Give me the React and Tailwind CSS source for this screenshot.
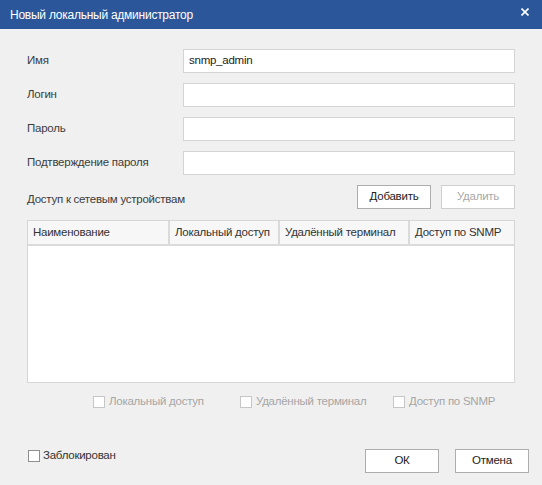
import React from "react";

const font = {
  fontFamily: '"Liberation Sans", Arial, sans-serif',
  letterSpacing: "-0.25px",
};

const Field = ({ label, value }) => (
  <div className="flex items-center h-[24px]">
    <span className="w-[156px] text-[11.5px] text-[#3c3c3c]">{label}</span>
    <div className="flex-1 h-[24px] bg-white border border-[#d4d4d4] flex items-center px-[5px] text-[11.5px] text-[#222]">
      {value}
    </div>
  </div>
);

const Box = ({ disabled }) => (
  <span
    className={
      "inline-block w-[12px] h-[12px] bg-white border " +
      (disabled ? "border-[#c6c6c6]" : "border-[#8f8f8f]")
    }
  />
);

const Btn = ({ children, disabled }) => (
  <div
    className={
      "w-[74px] h-[24px] flex items-center justify-center text-[11.5px] bg-white border " +
      (disabled ? "border-[#cfcfcf] text-[#a8a8a8]" : "border-[#adadad] text-[#222]")
    }
  >
    {children}
  </div>
);

export default function App() {
  const cols = [
    { name: "Наименование", w: "w-[142px]" },
    { name: "Локальный доступ", w: "w-[110px]" },
    { name: "Удалённый терминал", w: "w-[130px]" },
    { name: "Доступ по SNMP", w: "flex-1" },
  ];

  return (
    <div className="w-[542px] h-[485px] bg-[#f0f0f0] flex flex-col" style={font}>
      <div className="h-[29px] bg-[#2b579a] flex items-center justify-between pl-[10px] pr-[13px]">
        <span className="text-white text-[12px]">Новый локальный администратор</span>
        <svg width="8" height="8" viewBox="0 0 8 8" className="mb-[5px]">
          <path d="M0.5 0.5 L7.5 7.5 M7.5 0.5 L0.5 7.5" stroke="white" strokeWidth="1.6" />
        </svg>
      </div>

      <div className="flex flex-col flex-1 px-[27px] pt-[20px] pb-[12px]">
        <div className="flex flex-col gap-[10px]">
          <Field label="Имя" value="snmp_admin" />
          <Field label="Логин" />
          <Field label="Пароль" />
          <Field label="Подтверждение пароля" />
        </div>

        <div className="flex items-end justify-between mt-[10px]">
          <span className="text-[11.5px] text-[#3c3c3c] mb-[1px]">Доступ к сетевым устройствам</span>
          <div className="flex gap-[10px]">
            <Btn>Добавить</Btn>
            <Btn disabled>Удалить</Btn>
          </div>
        </div>

        <div className="mt-[11px] h-[163px] bg-white border border-[#d6d6d6] flex flex-col">
          <div className="flex h-[25px] bg-[#f7f7f7]">
            {cols.map((c, i) => (
              <div
                key={c.name}
                className={
                  c.w +
                  " flex items-center whitespace-nowrap overflow-hidden px-[5px] text-[11.5px] text-[#333] border-b-2 border-[#dadada] " +
                  (i < cols.length - 1 ? "border-r-2" : "")
                }
              >
                {c.name}
              </div>
            ))}
          </div>
        </div>

        <div className="flex items-center mt-[10px] pl-[66px] text-[11.5px] text-[#a6a6a6]">
          <div className="w-[147px] flex items-center gap-[4px]">
            <Box disabled />
            <span>Локальный доступ</span>
          </div>
          <div className="w-[153px] flex items-center gap-[4px]">
            <Box disabled />
            <span>Удалённый терминал</span>
          </div>
          <div className="flex items-center gap-[4px]">
            <Box disabled />
            <span>Доступ по SNMP</span>
          </div>
        </div>

        <div className="mt-auto flex items-start justify-between">
          <div className="flex items-center gap-[3px] pl-[1px] -mt-[2px] text-[11.5px] text-[#333]">
            <Box />
            <span>Заблокирован</span>
          </div>
          <div className="flex gap-[16px] mr-[-14px]">
            <Btn>ОК</Btn>
            <Btn>Отмена</Btn>
          </div>
        </div>
      </div>
    </div>
  );
}
